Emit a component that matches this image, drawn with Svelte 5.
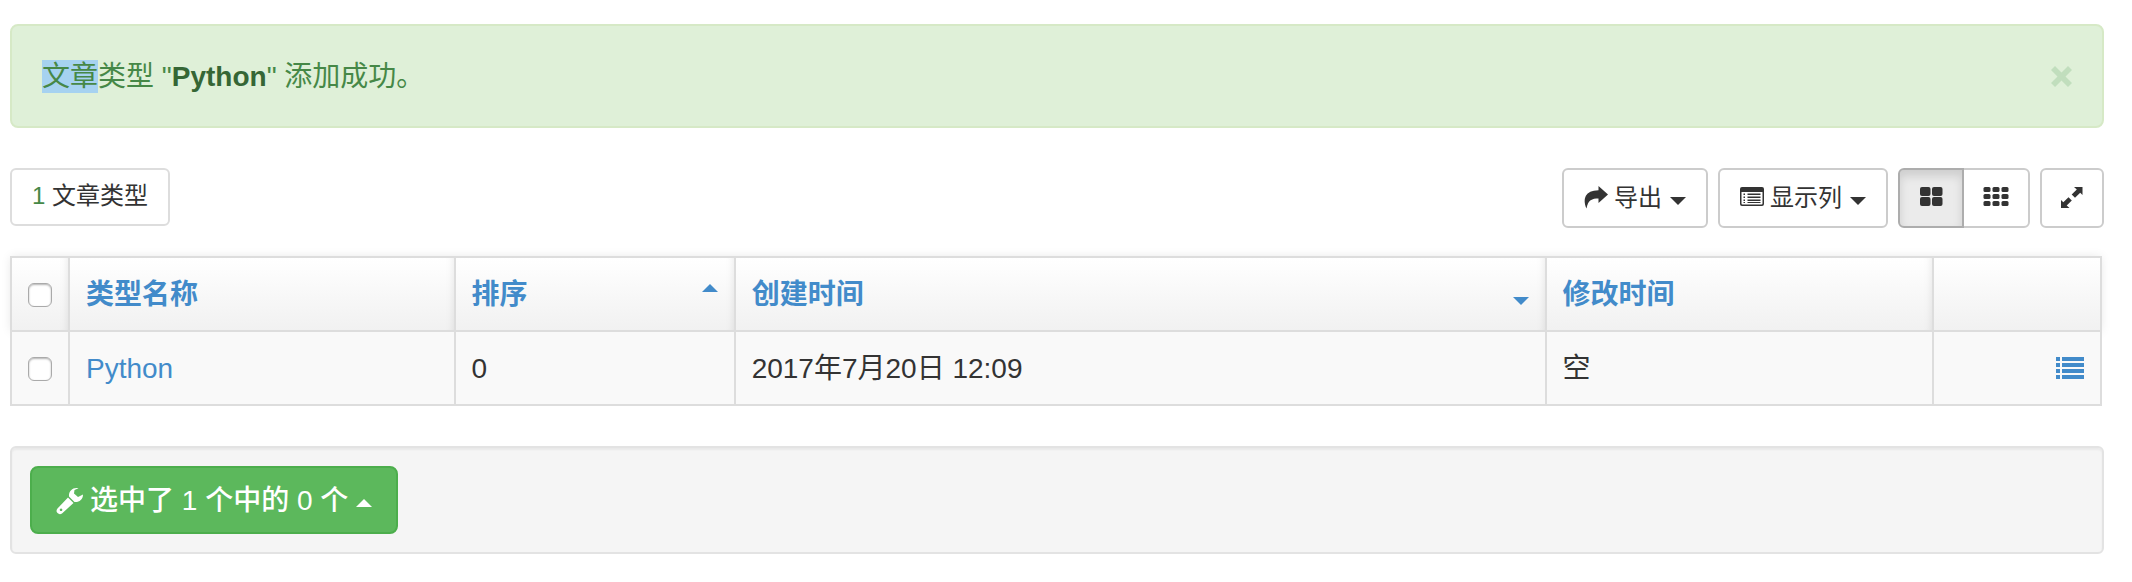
<script>
  const columns = [
    { label: '类型名称', sort: null },
    { label: '排序', sort: 'up' },
    { label: '创建时间', sort: 'down' },
    { label: '修改时间', sort: null }
  ];
  const rows = [{ name: 'Python', order: '0', created: '2017年7月20日 12:09', modified: '空' }];
  const grid = [0, 1, 2];
</script>

<main>
  <div class="alert" role="alert">
    <p><span class="marked">文章</span>类型 "<strong>Python</strong>" 添加成功。</p>
    <button class="close" type="button" aria-label="关闭">
      <svg width="21" height="21" viewBox="0 0 21 21"><path d="M4 0l6.500 6.500L17 0l4 4-6.500 6.500L21 17l-4 4-6.500-6.500L4 21l-4-4 6.500-6.500L0 4z" /></svg>
    </button>
  </div>

  <div class="toolbar">
    <div class="count"><span>1</span> 文章类型</div>
    <div class="actions">
      <button class="btn" type="button">
        <svg width="24" height="24" viewBox="0 0 24 24"><path d="M14.500 0L24 8.500l-9.500 8.500v-4.500C8 12.500 4 14 2.500 22.500C-1.500 13 1 4.500 14.500 4.300z" /></svg>
        <span>导出</span><i class="caret"></i>
      </button>
      <button class="btn" type="button">
        <svg width="24" height="24" viewBox="0 0 24 24"><path fill-rule="evenodd" d="M2 1h20q2 0 2 2v15q0 2-2 2H2q-2 0-2-2V3q0-2 2-2zM1.500 6v11.500q0 1 1 1h19q1 0 1-1V6zM3.500 7.500h1.500v1.500h-1.500zm4 0h13v1.500h-13zm-4 3h1.500v1.500h-1.500zm4 0h13v1.500h-13zm-4 3h1.500v1.500h-1.500zm4 0h13v1.500h-13zm-4 2.500h1.500v1h-1.500zm4 0h13v1h-13z" /></svg>
        <span>显示列</span><i class="caret"></i>
      </button>
      <div class="group">
        <button class="btn icon active" type="button" aria-label="大图标">
          <svg width="24" height="24" viewBox="0 0 24 24">
            {#each [0, 1] as r}{#each [0, 1] as c}<rect x={1 + c * 12} y={1 + r * 10} width="10.500" height="9" rx="2" />{/each}{/each}
          </svg>
        </button>
        <button class="btn icon" type="button" aria-label="小图标">
          <svg width="24" height="24" viewBox="0 0 24 24">
            {#each grid as r}{#each grid as c}<rect x={c * 9 - 0.500} y={1 + r * 7} width="7" height="5" rx="1.500" />{/each}{/each}
          </svg>
        </button>
      </div>
      <button class="btn icon" type="button" aria-label="全屏">
        <svg width="24" height="24" viewBox="0 0 24 24"><path d="M14 1H22.500V9l-2.300-2.300L15 11.800 11.700 8.500 16.800 3.500zM1 22v-8l2.300 2.300L8.500 11.200l3.300 3.300L6.700 19.500 9.500 22z" /></svg>
      </button>
    </div>
  </div>

  <table>
    <colgroup><col class="c-check" /><col class="c-name" /><col class="c-order" /><col class="c-created" /><col class="c-modified" /><col /></colgroup>
    <thead>
      <tr>
        <th class="check"><input type="checkbox" aria-label="全选" /></th>
        {#each columns as col}
          <th><div class="head"><a href="#sort">{col.label}</a>{#if col.sort}<i class="sort {col.sort}"></i>{/if}</div></th>
        {/each}
        <th></th>
      </tr>
    </thead>
    <tbody>
      {#each rows as row}
        <tr>
          <td class="check"><input type="checkbox" aria-label={row.name} /></td>
          <td><a href="#row">{row.name}</a></td>
          <td>{row.order}</td>
          <td>{row.created}</td>
          <td>{row.modified}</td>
          <td class="detail">
            <a href="#detail" aria-label="详情"><svg width="28" height="22" viewBox="0 0 28 22">
              {#each [0, 6, 12, 18] as y}<path d="M0 {y}h4v4h-4zM6 {y}h22v4h-22z" />{/each}
            </svg></a>
          </td>
        </tr>
      {/each}
    </tbody>
  </table>

  <div class="well">
    <button class="btn success" type="button">
      <svg width="28" height="28" viewBox="0 0 28 28"><path fill-rule="evenodd" d="M22.500 1.200C17 0 12.500 4 13 9.500l5.500 5.500c4.500 0.500 8.500-2.500 8.500-7.500l-5 2.500-4-3.500 0.500-3.500zM12 10.500l5.500 5.500L6 26.500q-2.500 1.500-4.500-0.500t0-4.500zM5 21.500a1.300 1.300 0 1 0 0.100 0z" /></svg>
      <span>选中了 1 个中的 0 个</span><i class="caret rise"></i>
    </button>
  </div>
</main>

<style>
  :global(body) { background: #fff; }
  main {
    padding: 24px 28px 28px 10px;
    font-family: "Liberation Sans", "Noto Sans CJK SC", sans-serif;
    font-size: 28px;
    line-height: 40px;
    color: #333;
  }
  svg { fill: currentColor; flex: none; overflow: visible; }
  a { color: #428bca; text-decoration: none; }
  .alert {
    display: flex;
    justify-content: space-between;
    align-items: center;
    padding: 30px;
    border: 2px solid #d6e9c6;
    border-radius: 8px;
    background: #dff0d8;
    color: #468847;
  }
  p { margin: 0; padding-top: 2px; line-height: 38px; }
  .marked { padding: 1px 0; background: #a6d2f0; }
  strong { color: #356635; }
  .close {
    display: flex;
    padding: 0;
    border: 0;
    background: none;
    color: #c1debd;
  }
  .toolbar {
    display: flex;
    justify-content: space-between;
    align-items: flex-start;
    margin: 40px 0 28px;
    font-size: 24px;
    line-height: 34px;
  }
  .count {
    box-sizing: border-box;
    height: 58px;
    padding: 9px 20px;
    border: 2px solid #ddd;
    border-radius: 6px;
  }
  .count span { color: #468847; }
  .actions { display: flex; gap: 10px; }
  .group { display: flex; }
  .btn {
    box-sizing: border-box;
    display: flex;
    align-items: center;
    height: 60px;
    padding: 0 20px;
    border: 2px solid #ccc;
    border-radius: 6px;
    background: #fff;
    color: #333;
    font: inherit;
    white-space: nowrap;
  }
  .btn svg { margin-right: 6px; }
  .btn.icon svg { margin: 0; }
  .icon { padding: 0 18px; justify-content: center; }
  .group .icon { width: 68px; }
  .group .icon:first-child { width: 66px; border-radius: 6px 0 0 6px; margin-right: -2px; z-index: 1; }
  .group .icon:last-child { border-radius: 0 6px 6px 0; }
  .active {
    background: #ebebeb;
    border-color: #adadad;
    box-shadow: inset 0 6px 10px rgba(0, 0, 0, 0.125);
  }
  .caret {
    margin: 6px 0 0 8px;
    border: 8px solid transparent;
    border-top-color: currentColor;
    border-bottom: 0;
  }
  table {
    width: calc(100% - 2px);
    table-layout: fixed;
    border-collapse: collapse;
  }
  thead { box-shadow: 0 0 10px rgba(0, 0, 0, 0.1); }
  th, td {
    height: 70px;
    padding: 2px 16px 0;
    border: 2px solid #ddd;
    text-align: left;
  }
  th {
    background: linear-gradient(#fff, #f1f1f1);
    box-shadow: inset -8px 0 8px -8px rgba(0, 0, 0, 0.1);
  }
  th:last-child { box-shadow: none; }
  td { background: #f9f9f9; }
  .c-check { width: 58px; }
  .c-name { width: 18.450%; }
  .c-order { width: 13.400%; }
  .c-created { width: 38.800%; }
  .c-modified { width: 18.550%; }
  input {
    appearance: none;
    display: block;
    width: 24px;
    height: 24px;
    margin: 0;
    border: 1px solid #aaa;
    border-radius: 6px;
    background: #fff;
    box-shadow: inset 0 1px 2px rgba(0, 0, 0, 0.3);
  }
  .head { display: flex; justify-content: space-between; }
  .sort { align-self: flex-start; border: 8px solid transparent; }
  .up { margin-top: 9px; border-top: 0; border-bottom-color: #428bca; }
  .down { margin-top: 22px; border-bottom: 0; border-top-color: #428bca; }
  .detail { padding-top: 0; }
  .detail a { display: flex; justify-content: flex-end; }
  .well {
    margin-top: 40px;
    padding: 18px;
    border: 2px solid #e3e3e3;
    border-radius: 6px;
    background: #f5f5f5;
    box-shadow: inset 0 2px 2px rgba(0, 0, 0, 0.05);
  }
  .success {
    height: 68px;
    padding: 2px 24px 0;
    border-color: #4cae4c;
    border-radius: 8px;
    background: #5cb85c;
    color: #fff;
    font-weight: 500;
  }
  .rise { margin-top: 4px; border: 8px solid transparent; border-top: 0; border-bottom-color: currentColor; }
</style>
